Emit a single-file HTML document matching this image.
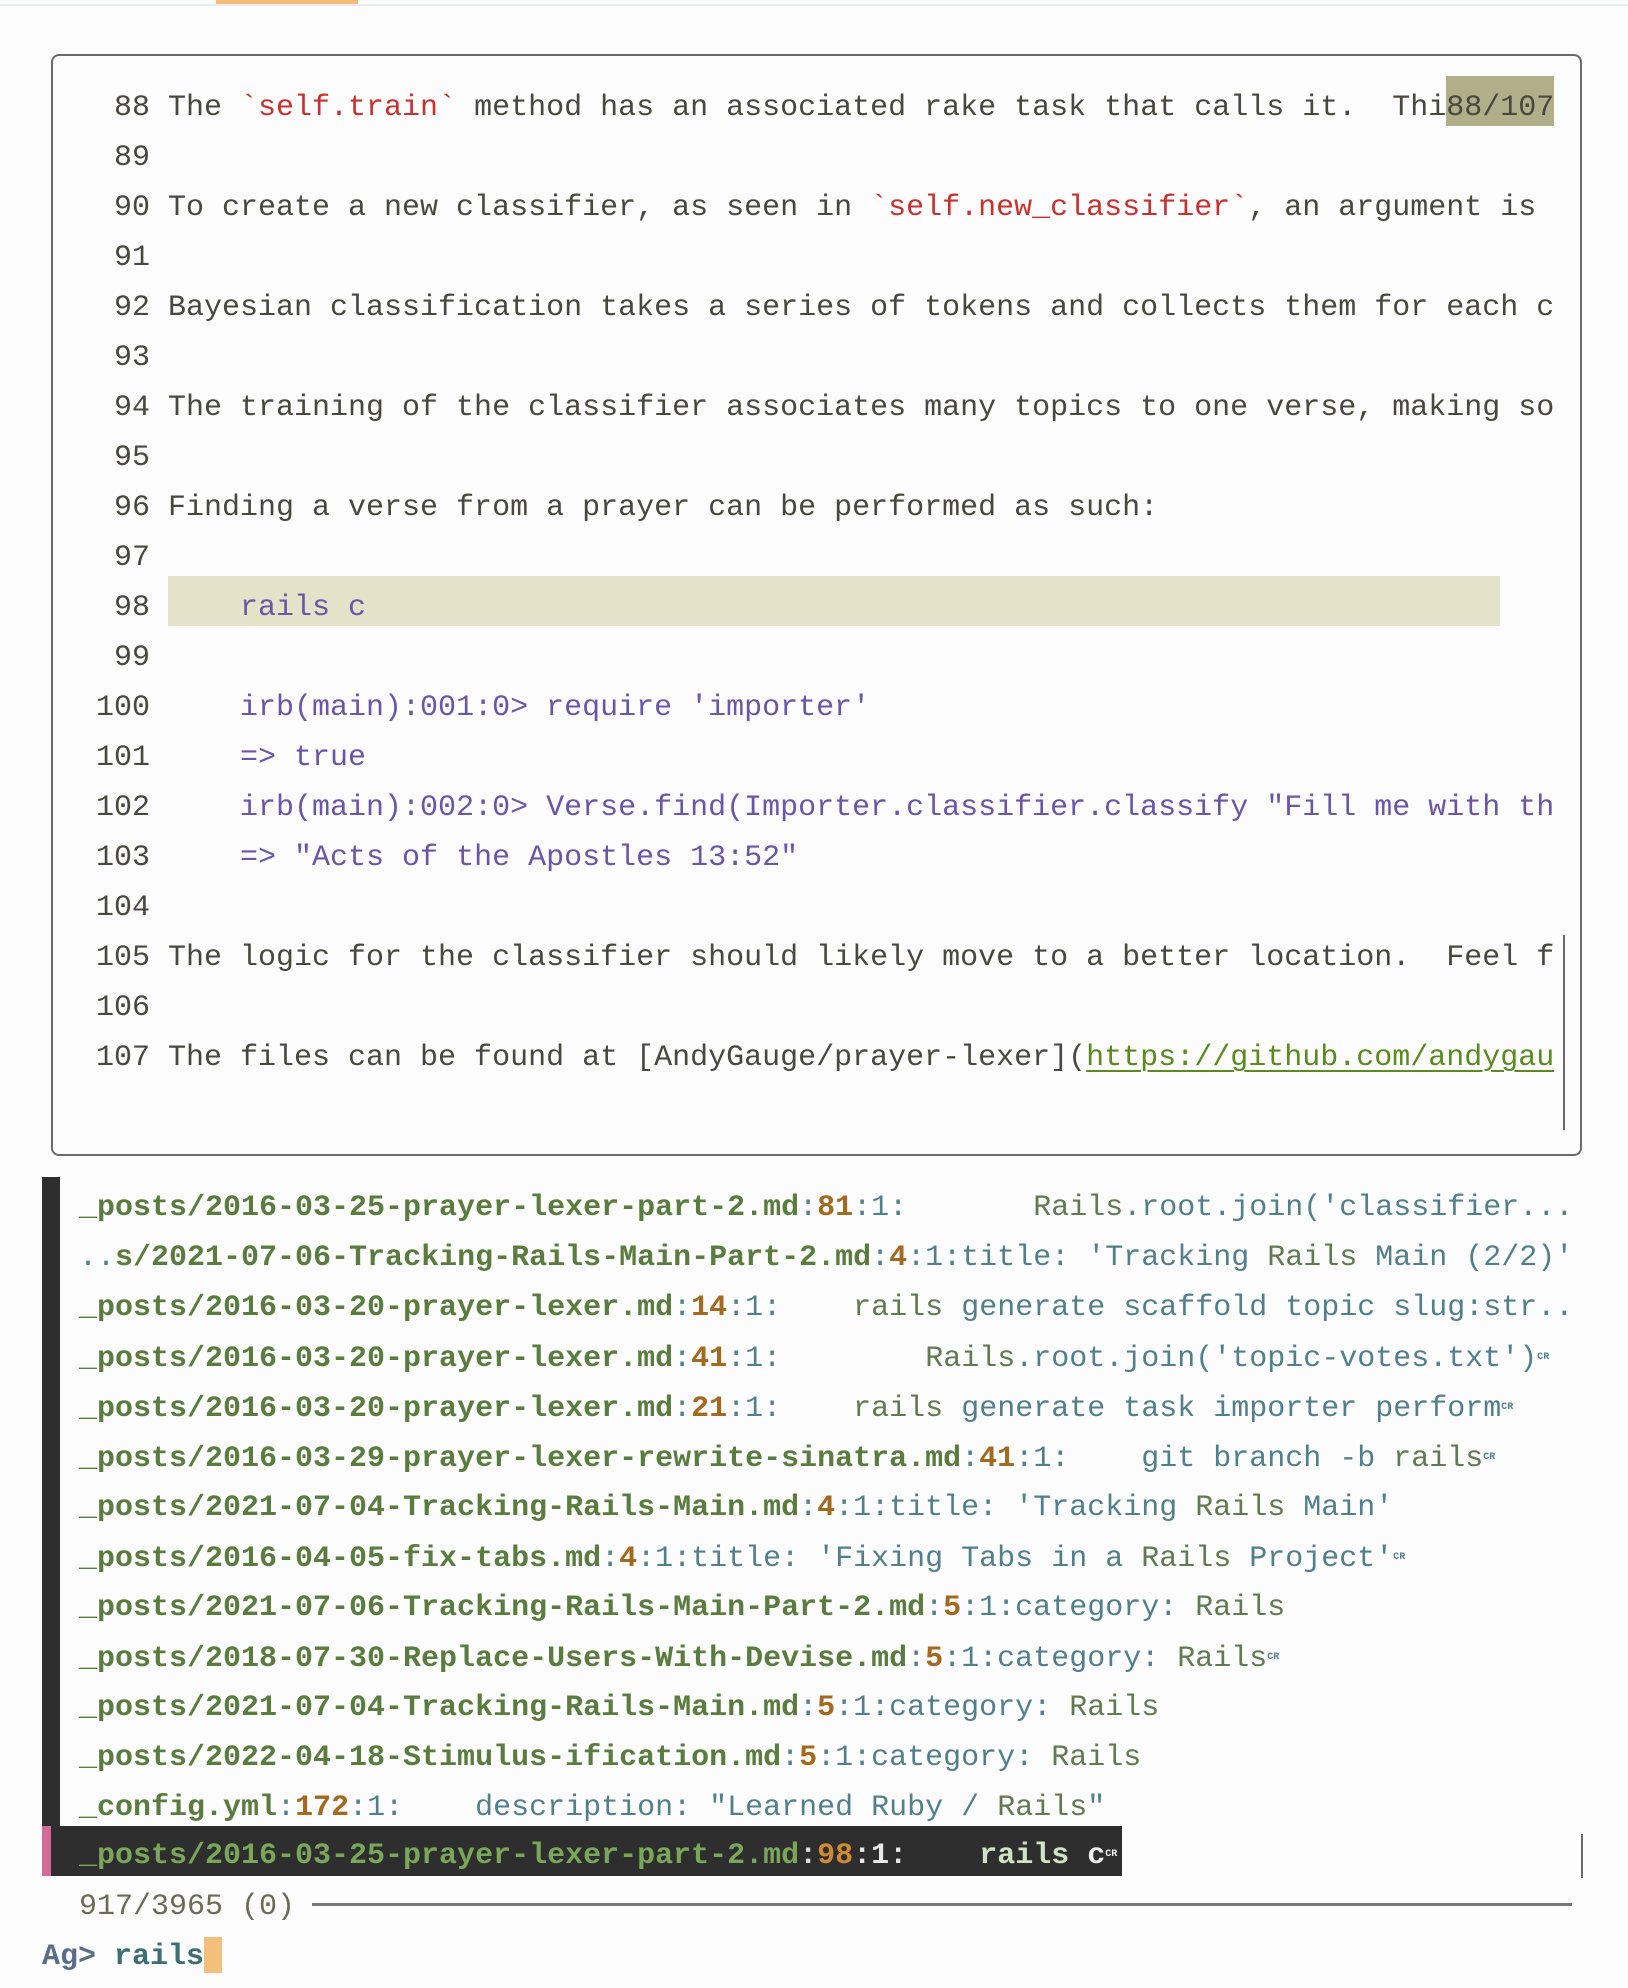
<!DOCTYPE html>
<html><head><meta charset="utf-8"><style>
html,body{margin:0;padding:0;}
body{width:1628px;height:1988px;background:#fcfcfc;position:relative;overflow:hidden;font-family:"Liberation Mono",monospace;font-size:30px;}
.abs{position:absolute;}
.ln{position:absolute;left:96px;height:50px;line-height:50px;white-space:pre;color:#48483e;width:1459px;overflow:hidden;margin-top:3px;}
.r{color:#c8312e}.p{color:#6b55a8}.lk{color:#5b8a1e;text-decoration:underline;text-decoration-thickness:2px;text-underline-offset:5px}
.row{position:absolute;left:79px;height:50px;line-height:50px;white-space:pre;font-weight:bold;margin-top:3px;}
.g{color:#5a7d3f}.o{color:#a3691f}.t{color:#52808a;font-weight:normal}.m{color:#627a52;font-weight:normal}
.cr{font-size:10px;vertical-align:middle;font-weight:bold;color:#52808a}
</style></head><body>
<div class="abs" style="left:0;top:4px;width:1628px;height:2px;background:#e6eef0"></div>
<div class="abs" style="left:216px;top:0;width:142px;height:4px;background:#f2bd78"></div>

<div class="abs" style="left:51px;top:54px;width:1527px;height:1098px;border:2px solid #6a6a6a;border-radius:8px;"></div>
<div class="abs" style="left:1446px;top:76px;width:108px;height:50px;background:#b0af8a"></div>
<div class="abs" style="left:168px;top:576px;width:1332px;height:50px;background:#e4e2c9"></div>
<div class="abs" style="left:1563px;top:935px;width:2px;height:195px;background:#6a6a6a"></div>

<div class="ln" style="top:80px"> 88 The <span class="r">`self.train`</span> method has an associated rake task that calls it.  Thi88/107</div>
<div class="ln" style="top:130px"> 89</div>
<div class="ln" style="top:180px"> 90 To create a new classifier, as seen in <span class="r">`self.new_classifier`</span>, an argument is</div>
<div class="ln" style="top:230px"> 91</div>
<div class="ln" style="top:280px"> 92 Bayesian classification takes a series of tokens and collects them for each c</div>
<div class="ln" style="top:330px"> 93</div>
<div class="ln" style="top:380px"> 94 The training of the classifier associates many topics to one verse, making so</div>
<div class="ln" style="top:430px"> 95</div>
<div class="ln" style="top:480px"> 96 Finding a verse from a prayer can be performed as such:</div>
<div class="ln" style="top:530px"> 97</div>
<div class="ln" style="top:580px"> 98 <span class="p">    rails c</span></div>
<div class="ln" style="top:630px"> 99</div>
<div class="ln" style="top:680px">100 <span class="p">    irb(main):001:0&gt; require 'importer'</span></div>
<div class="ln" style="top:730px">101 <span class="p">    =&gt; true</span></div>
<div class="ln" style="top:780px">102 <span class="p">    irb(main):002:0&gt; Verse.find(Importer.classifier.classify "Fill me with th</span></div>
<div class="ln" style="top:830px">103 <span class="p">    =&gt; "Acts of the Apostles 13:52"</span></div>
<div class="ln" style="top:880px">104</div>
<div class="ln" style="top:930px">105 The logic for the classifier should likely move to a better location.  Feel f</div>
<div class="ln" style="top:980px">106</div>
<div class="ln" style="top:1030px">107 The files can be found at [AndyGauge/prayer-lexer](<span class="lk">https://github.com/andygau</span></div>

<div class="abs" style="left:42px;top:1177px;width:18px;height:650px;background:#2e2e2e"></div>
<div class="abs" style="left:42px;top:1826px;width:9px;height:50px;background:#d46a9a"></div>
<div class="abs" style="left:51px;top:1826px;width:1071px;height:50px;background:#2e2e2e"></div>
<div class="abs" style="left:1581px;top:1834px;width:2px;height:44px;background:#6a6a6a"></div>

<div class="row" style="top:1180px"><span class="g">_posts/2016-03-25-prayer-lexer-part-2.md</span><span class="t">:</span><span class="o">81</span><span class="t">:1:       <span class="m">Rails</span>.root.join('classifier...</span></div>
<div class="row" style="top:1230px"><span class="t">..</span><span class="g">s/2021-07-06-Tracking-Rails-Main-Part-2.md</span><span class="t">:</span><span class="o">4</span><span class="t">:1:title: 'Tracking <span class="m">Rails</span> Main (2/2)'</span></div>
<div class="row" style="top:1280px"><span class="g">_posts/2016-03-20-prayer-lexer.md</span><span class="t">:</span><span class="o">14</span><span class="t">:1:    <span class="m">rails</span> generate scaffold topic slug:str..</span></div>
<div class="row" style="top:1330px"><span class="g">_posts/2016-03-20-prayer-lexer.md</span><span class="t">:</span><span class="o">41</span><span class="t">:1:        <span class="m">Rails</span>.root.join('topic-votes.txt')</span><span class="cr">CR</span></div>
<div class="row" style="top:1380px"><span class="g">_posts/2016-03-20-prayer-lexer.md</span><span class="t">:</span><span class="o">21</span><span class="t">:1:    <span class="m">rails</span> generate task importer perform</span><span class="cr">CR</span></div>
<div class="row" style="top:1430px"><span class="g">_posts/2016-03-29-prayer-lexer-rewrite-sinatra.md</span><span class="t">:</span><span class="o">41</span><span class="t">:1:    git branch -b <span class="m">rails</span></span><span class="cr">CR</span></div>
<div class="row" style="top:1480px"><span class="g">_posts/2021-07-04-Tracking-Rails-Main.md</span><span class="t">:</span><span class="o">4</span><span class="t">:1:title: 'Tracking <span class="m">Rails</span> Main'</span></div>
<div class="row" style="top:1530px"><span class="g">_posts/2016-04-05-fix-tabs.md</span><span class="t">:</span><span class="o">4</span><span class="t">:1:title: 'Fixing Tabs in a <span class="m">Rails</span> Project'</span><span class="cr">CR</span></div>
<div class="row" style="top:1580px"><span class="g">_posts/2021-07-06-Tracking-Rails-Main-Part-2.md</span><span class="t">:</span><span class="o">5</span><span class="t">:1:category: <span class="m">Rails</span></span></div>
<div class="row" style="top:1630px"><span class="g">_posts/2018-07-30-Replace-Users-With-Devise.md</span><span class="t">:</span><span class="o">5</span><span class="t">:1:category: <span class="m">Rails</span></span><span class="cr">CR</span></div>
<div class="row" style="top:1680px"><span class="g">_posts/2021-07-04-Tracking-Rails-Main.md</span><span class="t">:</span><span class="o">5</span><span class="t">:1:category: <span class="m">Rails</span></span></div>
<div class="row" style="top:1730px"><span class="g">_posts/2022-04-18-Stimulus-ification.md</span><span class="t">:</span><span class="o">5</span><span class="t">:1:category: <span class="m">Rails</span></span></div>
<div class="row" style="top:1780px"><span class="g">_config.yml</span><span class="t">:</span><span class="o">172</span><span class="t">:1:    description: "Learned Ruby / <span class="m">Rails</span>"</span></div>
<div class="row" style="top:1827px"><span style="color:#7aa65a">_posts/2016-03-25-prayer-lexer-part-2.md</span><span style="color:#ddd">:</span><span style="color:#d08a30">98</span><span style="color:#e8e8e8">:1:    </span><span style="color:#cfe3c4">rails</span><span style="color:#eee"> c</span><span class="cr" style="color:#eee">CR</span></div>

<div class="abs" style="left:79px;top:1882px;height:50px;line-height:50px;white-space:pre;color:#6b6b55">917/3965 (0)</div>
<div class="abs" style="left:312px;top:1903px;width:1260px;height:3px;background:#777"></div>

<div class="abs" style="left:42px;top:1932px;height:50px;line-height:50px;white-space:pre;font-weight:bold"><span style="color:#5a6e8a">Ag&gt; </span><span style="color:#3d6e72">rails</span></div>
<div class="abs" style="left:204px;top:1937px;width:18px;height:36px;background:#f2c07a"></div>
</body></html>
